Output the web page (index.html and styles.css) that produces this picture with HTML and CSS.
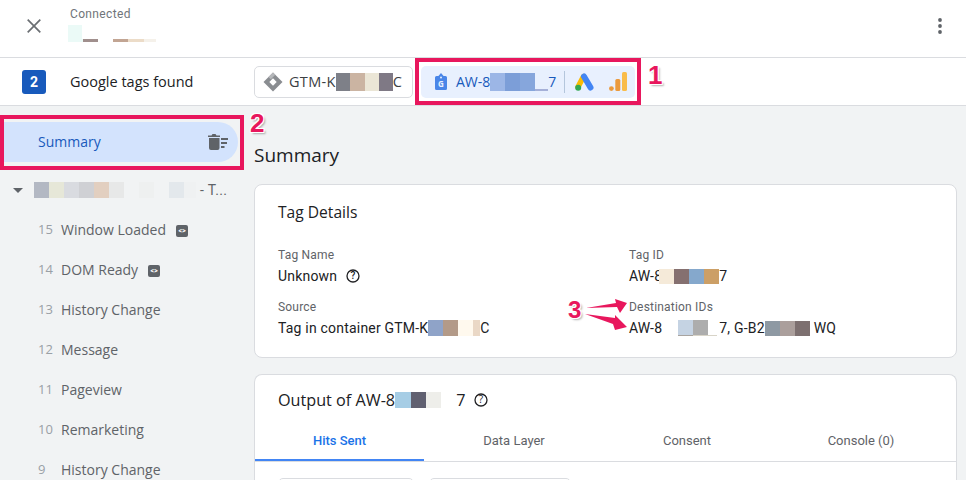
FILE: index.html
```html
<!DOCTYPE html>
<html lang="en">
<head>
    <meta charset="UTF-8">
    <title>Tag Assistant</title>
    <link rel="stylesheet" href="styles.css">
</head>
<body>

    <!-- Top bar -->
    <header class="top-bar">
        <svg class="close-icon" width="14" height="14" viewBox="0 0 14 14"><path d="M.7.7l12.600 12.600M13.300.7L.7 13.300" stroke="#6b6f73" stroke-width="1.700" fill="none"/></svg>
        <div class="connected">
            <div class="connected-label">Connected</div>
            <div class="blur blur-url"></div>
        </div>
        <svg class="more-icon" width="4" height="16" viewBox="0 0 4 16"><circle cx="2" cy="2" r="1.900" fill="#5f6368"/><circle cx="2" cy="8" r="1.900" fill="#5f6368"/><circle cx="2" cy="14" r="1.900" fill="#5f6368"/></svg>
    </header>

    <!-- Tags found -->
    <div class="tags-bar">
        <div class="count-badge">2</div>
        <div class="tags-title">Google tags found</div>
        <div class="chip chip-gtm">
            <svg width="20" height="20" viewBox="0 0 20 20"><path d="M10 .5L19.500 10 10 19.500.5 10z" fill="#8a8d91"/><path d="M10 6.300L13.700 10 10 13.700 6.300 10z" fill="#fff"/><path d="M5.500 5L10 .5l2.300 2.300L7.800 7.300z" fill="#b5b7ba"/></svg>
            <span>GTM-K</span><span class="blur blur-gtm"></span><span>C</span>
        </div>
        <div class="chip chip-aw">
            <svg class="tag-icon" width="12" height="17" viewBox="0 0 12 17"><path d="M6 0L8.600 3H10.500Q12 3 12 4.500V15.500Q12 17 10.500 17H1.500Q0 17 0 15.500V4.500Q0 3 1.500 3H3.400z" fill="#4a86e8"/><circle cx="6" cy="4.500" r="1" fill="#e8f0fe"/><text x="6" y="13.500" class="tag-g">G</text></svg>
            <span class="chip-id">AW-8</span><span class="blur blur-aw"></span><span>7</span>
            <span class="chip-sep"></span>
            <svg class="ads-logo" width="19" height="18" viewBox="0 0 19 18"><path d="M8.500 3.500L3 14" stroke="#fbbc04" stroke-width="5.500" stroke-linecap="round"/><path d="M9 3.500l6.500 11" stroke="#4285f4" stroke-width="6" stroke-linecap="round"/><circle cx="3.200" cy="14.800" r="3" fill="#34a853"/></svg>
            <svg class="analytics-logo" width="18" height="19" viewBox="0 0 18 19"><rect x="13" y="0" width="5" height="19" rx="1.500" fill="#f9bc4a"/><rect x="6.300" y="7" width="5" height="12" rx="1.500" fill="#eb9a3e"/><circle cx="2.400" cy="16.600" r="2.400" fill="#eb9a3e"/></svg>
        </div>
    </div>

    <div class="content">
        <!-- Left navigation -->
        <aside class="sidebar">
            <div class="summary-item">
                <span class="summary-text">Summary</span>
                <svg width="20" height="16" viewBox="0 0 20 16"><path d="M1 4h10.500v10q0 2-2 2H3q-2 0-2-2zM0 1.500h3.500L4.500 0h3l1 1.500H12V3H0z" fill="#5f6368"/><path d="M13 5h7M13 9h6M13 13h3.500" stroke="#5f6368" stroke-width="1.800"/></svg>
            </div>
            <div class="page-row">
                <span class="caret"></span>
                <span class="blur blur-page"></span>
                <span class="page-rest">- T...</span>
            </div>
            <ul class="events">
                <li><span class="num">15</span>Window Loaded<span class="code-badge">&lt;&gt;</span></li>
                <li><span class="num">14</span>DOM Ready<span class="code-badge">&lt;&gt;</span></li>
                <li><span class="num">13</span>History Change</li>
                <li><span class="num">12</span>Message</li>
                <li><span class="num">11</span>Pageview</li>
                <li><span class="num">10</span>Remarketing</li>
                <li><span class="num">9</span>History Change</li>
            </ul>
        </aside>

        <!-- Main area -->
        <main class="main">
            <h1 class="main-title">Summary</h1>

            <section class="card details-card">
                <h2 class="card-title">Tag Details</h2>
                <div class="details-grid">
                    <div class="field">
                        <div class="field-label">Tag Name</div>
                        <div class="field-value">Unknown
                            <svg class="help" width="14" height="14" viewBox="0 0 14 14"><circle cx="7" cy="7" r="6" fill="none" stroke="#202124" stroke-width="1.300"/><text x="7" y="10.300" class="help-mark">?</text></svg>
                        </div>
                    </div>
                    <div class="field">
                        <div class="field-label">Tag ID</div>
                        <div class="field-value">AW-8<span class="blur blur-tagid"></span>7</div>
                    </div>
                    <div class="field">
                        <div class="field-label">Source</div>
                        <div class="field-value">Tag in container GTM-K<span class="blur blur-src"></span>C</div>
                    </div>
                    <div class="field">
                        <div class="field-label">Destination IDs</div>
                        <div class="field-value"><span>AW-8</span><span class="blur blur-dest1"></span><span>7, G-B2</span><span class="blur blur-dest2"></span><span>WQ</span></div>
                    </div>
                </div>
            </section>

            <section class="card output-card">
                <h2 class="card-title">Output of AW-8<span class="blur blur-out"></span>7
                    <svg class="help" width="14" height="14" viewBox="0 0 14 14"><circle cx="7" cy="7" r="6" fill="none" stroke="#202124" stroke-width="1.300"/><text x="7" y="10.300" class="help-mark">?</text></svg>
                </h2>
                <div class="tabs">
                    <div class="tab active">Hits Sent</div>
                    <div class="tab">Data Layer</div>
                    <div class="tab">Consent</div>
                    <div class="tab">Console (0)</div>
                </div>
                <div class="filters">
                    <div class="filter filter-a"></div>
                    <div class="filter filter-b"></div>
                </div>
            </section>
        </main>
    </div>

    <!-- Annotations on top of the screenshot -->
    <div class="mark-box mark-box-1"></div>
    <div class="mark-num mark-num-1">1</div>
    <div class="mark-box mark-box-2"></div>
    <div class="mark-num mark-num-2">2</div>
    <div class="mark-num mark-num-3">3</div>
    <svg class="arrows" width="44" height="40" viewBox="0 0 44 40">
        <path d="M1 13L31 8 30 4 42 8 35 18 32 12z" fill="#e8175d"/>
        <path d="M0 19L30 23 30 20 42 32 30 35 28 29z" fill="#e8175d"/>
    </svg>

</body>
</html>
```

FILE: styles.css
```css
* {
    box-sizing: border-box;
}

body {
    font-family: "Roboto", Arial, sans-serif;
    background-color: #fff;
    color: #202124;
    margin: 0;
    height: 480px;
    overflow: hidden;
    position: relative;
}

.top-bar {
    height: 58px;
    border-bottom: 1px solid #dadce0;
    display: flex;
    align-items: flex-start;
    padding: 0 24px 0 27px;
}

.close-icon {
    margin-top: 19px;
}

.connected {
    margin-left: 29px;
    margin-top: 7px;
}

.connected-label {
    font-size: 12px;
    line-height: 14px;
    color: #70757a;
    letter-spacing: 0.35px;
}

.more-icon {
    margin-left: auto;
    margin-top: 18px;
}

.tags-bar {
    height: 48px;
    border-bottom: 1px solid #dadce0;
    display: flex;
    align-items: center;
    padding-left: 22px;
}

.count-badge {
    width: 24px;
    height: 24px;
    background-color: #185abc;
    color: #fff;
    border-radius: 3px;
    font-size: 14px;
    font-weight: 700;
    text-align: center;
    line-height: 24px;
}

.tags-title {
    font-family: "Open Sans", sans-serif;
    font-size: 14.500px;
    font-weight: 500;
    margin-left: 24px;
    width: 184px;
    white-space: nowrap;
}

.chip {
    height: 32px;
    border-radius: 5px;
    display: flex;
    align-items: center;
    font-family: "Open Sans", sans-serif;
    font-size: 14px;
}

.chip-gtm {
    width: 159px;
    border: 1px solid #dadce0;
    padding-left: 8px;
    color: #3c4043;
    font-size: 14.500px;
    letter-spacing: 0.3px;
}

.chip-gtm svg {
    margin-right: 6px;
}

.chip-aw {
    width: 214px;
    margin-left: 8px;
    background-color: #e8f0fe;
    color: #185abc;
    padding-left: 14px;
}

.chip-id {
    margin-left: 9px;
}

.chip-sep {
    width: 1px;
    height: 22px;
    background-color: #b4c6dc;
    margin: 0 10px 0 8px;
}

.analytics-logo {
    margin-left: 15px;
}

.tag-g {
    font-size: 8px;
    font-weight: 700;
    fill: #e8f0fe;
    text-anchor: middle;
}

.content {
    display: flex;
    height: 374px;
    background-color: #f1f3f4;
    overflow: hidden;
}

.sidebar {
    width: 254px;
    flex-shrink: 0;
    padding-top: 16px;
    height: 374px;
    overflow: hidden;
}

.summary-item {
    width: 238px;
    height: 40px;
    background-color: #d3e3fd;
    border-radius: 0 20px 20px 0;
    display: flex;
    align-items: center;
    justify-content: space-between;
    padding: 0 10px 0 38px;
    font-family: "Open Sans", sans-serif;
    font-size: 14px;
    font-weight: 500;
    color: #185abc;
}

.summary-text {
    margin-bottom: 2px;
}

.page-row {
    display: flex;
    align-items: center;
    height: 20px;
    margin-top: 18px;
    padding-left: 13px;
    font-size: 14px;
    color: #5f6368;
}

.caret {
    width: 0;
    height: 0;
    border-left: 5px solid transparent;
    border-right: 5px solid transparent;
    border-top: 5px solid #5f6368;
    margin-right: 11px;
}

.page-rest {
    margin-left: 4px;
    letter-spacing: 0.4px;
}

.events {
    list-style: none;
    margin: 9px 0 0;
    padding: 0;
}

.events li {
    height: 40px;
    display: flex;
    align-items: center;
    font-family: "Open Sans", sans-serif;
    font-size: 14px;
    color: #5f6368;
    padding-left: 38px;
}

.num {
    width: 23px;
    color: #9aa0a6;
    font-size: 13px;
}

.code-badge {
    width: 12px;
    height: 12px;
    background-color: #5f6368;
    color: #fff;
    border-radius: 2px;
    font-family: "Roboto", sans-serif;
    font-size: 7px;
    font-weight: 700;
    line-height: 12px;
    text-align: center;
    margin: 3px 0 0 10px;
}

.main {
    flex: 1;
    padding-right: 9px;
}

.main-title {
    font-family: "Open Sans", sans-serif;
    font-size: 19px;
    font-weight: 400;
    line-height: 26px;
    margin: 36px 0 16px;
}

.card {
    background-color: #fff;
    border: 1px solid #dadce0;
    border-radius: 8px;
}

.details-card {
    height: 174px;
    padding: 17px 23px 0;
}

.card-title {
    font-family: "Open Sans", sans-serif;
    font-size: 15.600px;
    font-weight: 400;
    line-height: 20px;
    margin: 0;
}

.details-grid {
    display: grid;
    grid-template-columns: 351px 1fr;
    row-gap: 10px;
    margin-top: 25px;
}

.field-label {
    font-size: 12px;
    line-height: 16px;
    color: #5f6368;
    letter-spacing: 0.2px;
}

.field-value {
    font-size: 14px;
    line-height: 26px;
    letter-spacing: 0.2px;
    display: flex;
    align-items: center;
    white-space: nowrap;
}

.help {
    margin-left: 9px;
}

.help-mark {
    font-size: 10px;
    font-weight: 500;
    text-anchor: middle;
    fill: #202124;
}

.output-card {
    margin-top: 16px;
    height: 106px;
    padding-top: 15px;
    border-bottom: none;
    border-radius: 8px 8px 0 0;
    overflow: hidden;
}

.output-card .card-title {
    display: flex;
    align-items: center;
    padding-left: 23px;
    font-size: 16.200px;
}

.tabs {
    display: grid;
    grid-template-columns: 169px 180px 166px 1fr;
    margin-top: 13px;
    border-bottom: 1px solid #dadce0;
    padding-right: 4px;
}

.tab {
    height: 38px;
    text-align: center;
    line-height: 36px;
    font-size: 13px;
    color: #5f6368;
}

.tab.active {
    color: #1a73e8;
    border-bottom: 2px solid #4285f4;
    font-weight: 500;
}

.filters {
    display: flex;
    gap: 15px;
    margin: 16px 0 0 23px;
}

.filter {
    height: 32px;
    border: 1px solid #dadce0;
    border-radius: 5px;
}

.filter-a {
    width: 136px;
}

.filter-b {
    width: 142px;
}

/* Redacted strips */
.blur {
    display: inline-block;
    flex-shrink: 0;
}

.blur-url {
    width: 88px;
    height: 17px;
    margin: 4px 0 0 -2px;
    background:
        linear-gradient(90deg, #ebfaf7 0 15px, #a08f8d 15px 30px, transparent 30px 45px, #c2a593 45px 60px, #ecdcc8 60px 76px, #f5f1ea 76px 88px) bottom / 88px 3px no-repeat,
        linear-gradient(90deg, #ebfaf7 0 14px, transparent 14px) top / 88px 14px no-repeat;
}

.blur-gtm {
    width: 57px;
    height: 18px;
    background: linear-gradient(90deg, #7e8088 0 14px, #cbb4a2 14px 29px, #ebe6d6 29px 43px, #7f7985 43px 57px);
}

.blur-aw {
    width: 58px;
    height: 18px;
    background:
        linear-gradient(90deg, transparent 0 45px, #a5b0d8 45px) bottom / 58px 2px no-repeat,
        linear-gradient(90deg, #9cb6e6 0 15px, #7c9ed8 15px 30px, #86a6dc 30px 45px, transparent 45px);
}

.blur-page {
    width: 162px;
    height: 16px;
    background: linear-gradient(90deg, #b3b8c3 0 15px, #e6e7d8 15px 30px, #d9dbe0 30px 45px, #cfd0d4 45px 60px, #e2cfc0 60px 75px, #e7e8e8 75px 90px, transparent 90px 105px, #eef0f0 105px 120px, transparent 120px 135px, #e3e8ec 135px 150px, #eff1f2 150px 162px);
}

.blur-tagid {
    width: 60px;
    height: 15px;
    margin-left: -3px;
    background: linear-gradient(90deg, #f5ead9 0 15px, #857070 15px 30px, #85a8cc 30px 45px, #cc9f66 45px 60px);
}

.blur-src {
    width: 52px;
    height: 16px;
    background: linear-gradient(90deg, #8fa3c8 0 15px, #b39a88 15px 30px, #fff9ee 30px 45px, #ead8c6 45px 52px);
}

.blur-dest1 {
    width: 57px;
    height: 16px;
    background:
        linear-gradient(90deg, transparent 0 16px, #a8a4a0 16px 31px, #d8d4c8 31px 55px, transparent 55px) bottom / 57px 1px no-repeat,
        linear-gradient(90deg, #fff 0 16px, #c5d3e3 16px 31px, #adadad 31px 46px, #fff 46px);
}

.blur-dest2 {
    width: 45px;
    height: 15px;
    margin-right: 4px;
    background: linear-gradient(90deg, #8e99a3 0 15px, #ab9f9c 15px 30px, #7d7070 30px 45px);
}

.blur-out {
    width: 61px;
    height: 16px;
    background: linear-gradient(90deg, #a6cde5 0 16px, #606070 16px 31px, #eeeeea 31px 46px, #fff 46px);
}

/* Annotations */
.mark-box {
    position: absolute;
    border: 4px solid #e8175d;
}

.mark-box-1 {
    left: 415px;
    top: 58px;
    width: 226px;
    height: 47px;
}

.mark-box-2 {
    left: 0;
    top: 115px;
    width: 244px;
    height: 55px;
}

.mark-num {
    position: absolute;
    font-family: "Liberation Sans", Arial, sans-serif;
    font-weight: 700;
    font-size: 26px;
    color: #e8175d;
    text-shadow: 1px 1px 0 #fff, -1px -1px 0 #fff, 1px -1px 0 #fff, -1px 1px 0 #fff, 2px 2px 2px rgba(0, 0, 0, 0.3);
}

.mark-num-1 {
    left: 648px;
    top: 60px;
}

.mark-num-2 {
    left: 250px;
    top: 108px;
}

.mark-num-3 {
    left: 568px;
    top: 296px;
    font-size: 24px;
}

.arrows {
    position: absolute;
    left: 585px;
    top: 295px;
}
```
